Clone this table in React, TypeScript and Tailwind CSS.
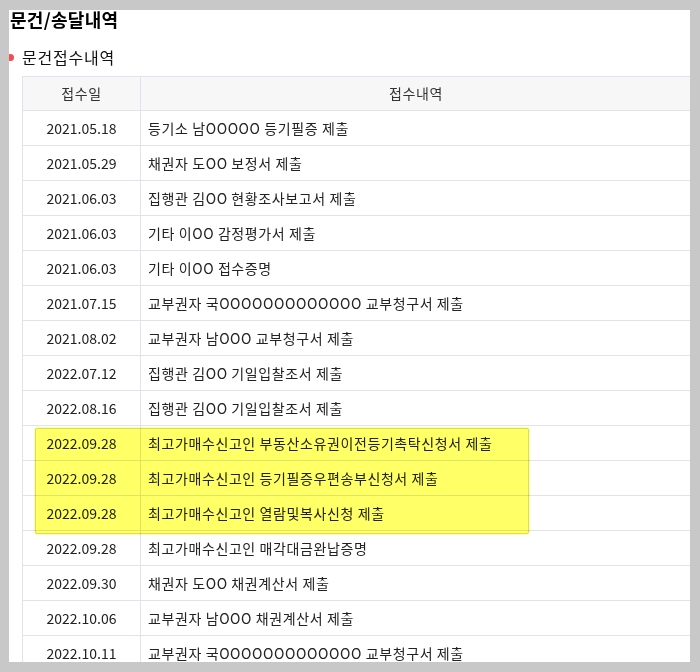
const rows: [string, string][] = [
  ["2021.05.18", "등기소 남OOOOO 등기필증 제출"],
  ["2021.05.29", "채권자 도OO 보정서 제출"],
  ["2021.06.03", "집행관 김OO 현황조사보고서 제출"],
  ["2021.06.03", "기타 이OO 감정평가서 제출"],
  ["2021.06.03", "기타 이OO 접수증명"],
  ["2021.07.15", "교부권자 국OOOOOOOOOOOOO 교부청구서 제출"],
  ["2021.08.02", "교부권자 남OOO 교부청구서 제출"],
  ["2022.07.12", "집행관 김OO 기일입찰조서 제출"],
  ["2022.08.16", "집행관 김OO 기일입찰조서 제출"],
  ["2022.09.28", "최고가매수신고인 부동산소유권이전등기촉탁신청서 제출"],
  ["2022.09.28", "최고가매수신고인 등기필증우편송부신청서 제출"],
  ["2022.09.28", "최고가매수신고인 열람및복사신청 제출"],
  ["2022.09.28", "최고가매수신고인 매각대금완납증명"],
  ["2022.09.30", "채권자 도OO 채권계산서 제출"],
  ["2022.10.06", "교부권자 남OOO 채권계산서 제출"],
  ["2022.10.11", "교부권자 국OOOOOOOOOOOOO 교부청구서 제출"],
];

function Row({ date, text }: { date: string; text: string }) {
  return (
    <div className="flex h-[35px] border-b border-[#dfe4ea] text-[14px] text-[#222]">
      <div className="flex w-[118px] shrink-0 items-center justify-center border-r border-[#dfe4ea]">
        {date}
      </div>
      <div className="flex items-center whitespace-nowrap pl-[7px] tracking-[0.6px]">{text}</div>
    </div>
  );
}

export default function App() {
  return (
    <div className="h-[672px] w-[700px] bg-[#c8c8c8] pb-[10px] pl-[9px] pr-[10px] pt-[10px] [font-family:'Noto_Sans_CJK_KR',sans-serif]">
      <div className="relative h-full overflow-hidden bg-white">
        {/* Title */}
        <h1 className="mt-[-3px] pl-px text-[18px] font-bold leading-[24px] tracking-[0.3px] text-black">
          문건/송달내역
        </h1>

        {/* Section label */}
        <div className="ml-[-2px] mt-[15px] flex items-center gap-[8px]">
          <span className="h-[7px] w-[7px] rounded-full bg-[#f04d55]" />
          <span className="text-[16px] leading-[22px] tracking-[0.8px] text-[#111]">문건접수내역</span>
        </div>

        {/* Table */}
        <div className="ml-[13px] mt-[8px] w-[669px] border-l border-[#dfe4ea]">
          <div className="flex h-[35px] border-y border-[#dfe4ea] bg-[#f7f7f7] text-[14px] tracking-[0.6px] text-[#333]">
            <div className="flex w-[118px] shrink-0 items-center justify-center border-r border-[#dfe4ea]">
              접수일
            </div>
            <div className="flex flex-1 items-center justify-center">접수내역</div>
          </div>
          {rows.map(([d, t], i) => (
            <Row key={i} date={d} text={t} />
          ))}
        </div>

        {/* Highlighter mark */}
        <div className="pointer-events-none absolute left-[26px] top-[418px] h-[106px] w-[494px] rounded-[2px] border border-[#e0e040] bg-[#ffff66] mix-blend-multiply shadow-[0_0_2px_rgba(220,220,0,0.7)]" />
      </div>
    </div>
  );
}
